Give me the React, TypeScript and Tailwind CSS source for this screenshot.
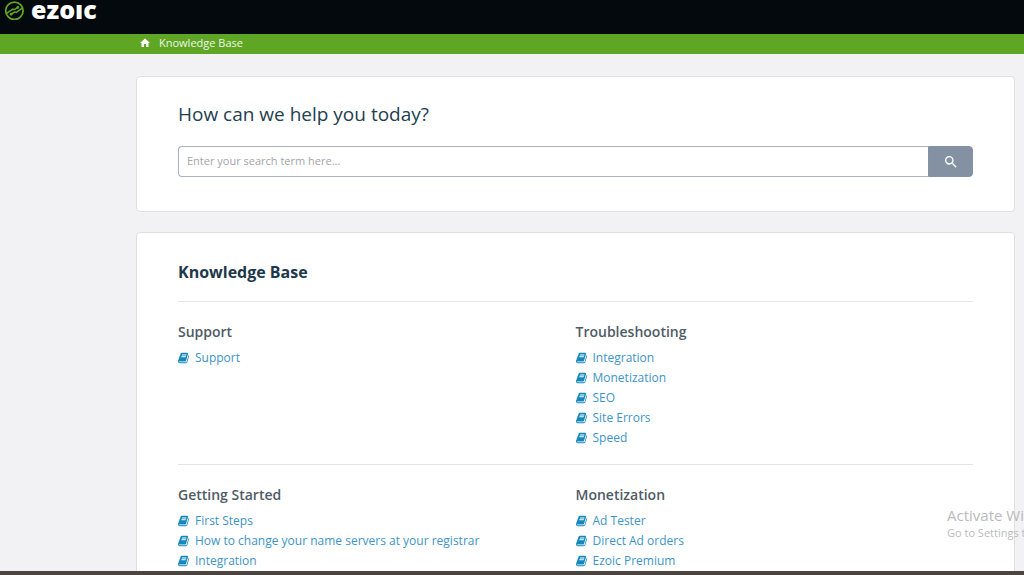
import React from "react";
import { MdHome, MdSearch } from "react-icons/md";

type Category = { title: string; links: string[] };

const rows: Category[][] = [
  [
    { title: "Support", links: ["Support"] },
    {
      title: "Troubleshooting",
      links: ["Integration", "Monetization", "SEO", "Site Errors", "Speed"],
    },
  ],
  [
    {
      title: "Getting Started",
      links: [
        "First Steps",
        "How to change your name servers at your registrar",
        "Integration",
      ],
    },
    {
      title: "Monetization",
      links: ["Ad Tester", "Direct Ad orders", "Ezoic Premium"],
    },
  ],
];

function LogoMark() {
  return (
    <svg viewBox="0 0 20 20" className="size-5 shrink-0" fill="none" aria-hidden="true">
      <circle cx="10.4" cy="10.8" r="8.7" stroke="#5fa624" strokeWidth="1.8" />
      <g stroke="#5fa624" strokeWidth="1.5" strokeLinecap="round" strokeLinejoin="round">
        <path d="M2.6 13.4 8.6 9.2 10.4 9.6 13.8 7.4" />
        <path d="M7.2 14.2 10.6 12 12.4 12.4 18.2 8.2" />
      </g>
      <circle cx="13.8" cy="7.4" r="1.4" fill="#5fa624" />
      <circle cx="7.2" cy="14.2" r="1.4" fill="#5fa624" />
    </svg>
  );
}

function BookIcon() {
  return (
    <svg viewBox="0 0 1792 1792" className="size-3 shrink-0" fill="#1487bd" aria-hidden="true">
      <path d="M1639 478q40 57 18 129l-275 906q-19 64-76.5 107.5t-122.5 43.5h-923q-77 0-148.5-53.5t-99.5-131.5q-24-67-2-127 0-4 3-27t4-37q1-8-3-21.5t-3-19.5q2-11 8-21t16.5-23.5 16.5-23.5q23-38 45-91.5t30-91.5q3-10 .5-30t-.5-28q3-11 17-28t17-23q21-36 42-92t25-90q1-9-2.5-32t.5-28q4-13 22-30.5t22-22.5q19-26 42.5-84.5t27.5-96.5q1-8-3-25.5t-2-26.5q2-8 9-18t18-23 17-21q8-12 16.5-30.5t15-35 16-36 19.5-32 26.5-23.5 36-11.5 47.5 5.5l-1 3q38-9 51-9h761q74 0 114 56t18 130l-274 906q-36 119-71.5 153.5t-128.5 34.5h-869q-27 0-38 15-11 16-1 43 24 70 144 70h923q29 0 56-15.5t35-41.5l300-987q7-22 5-57 38 15 59 43zm-1064 2q-4 13 2 22.5t20 9.5h608q13 0 25.5-9.5t16.5-22.5l21-64q4-13-2-22.5t-20-9.5h-608q-13 0-25.5 9.5t-16.5 22.5zm-83 256q-4 13 2 22.5t20 9.5h608q13 0 25.5-9.5t16.5-22.5l21-64q4-13-2-22.5t-20-9.5h-608q-13 0-25.5 9.5t-16.5 22.5z" />
    </svg>
  );
}

function CategoryBlock({ title, links }: Category) {
  return (
    <section>
      <h3 className="text-sm leading-5 font-semibold text-[#4f5b66]">{title}</h3>
      <ul className="mt-1.5">
        {links.map((link) => (
          <li key={link} className="flex">
            <a
              href="#"
              className="flex items-center gap-[5px] text-xs leading-5 text-[#3e94c6]"
            >
              <BookIcon />
              {link}
            </a>
          </li>
        ))}
      </ul>
    </section>
  );
}

export default function App() {
  return (
    <div className="relative flex h-screen flex-col overflow-hidden bg-[#f2f2f4] font-['Open_Sans','Noto_Sans',sans-serif]">
      <header className="flex h-[34px] shrink-0 items-start bg-[#03090c] pl-1">
        <a href="#" aria-label="ezoic" className="flex items-start gap-[7px]">
          <LogoMark />
          <span className="text-[25px] leading-[18px] font-extrabold text-white">ezoıc</span>
        </a>
      </header>

      <nav className="flex h-5 shrink-0 items-center bg-[#5fa624] pr-2 pb-[3px] pl-[139px]">
        <a href="#" aria-label="Home" className="text-white">
          <MdHome className="size-3" />
        </a>
        <a href="#" className="ml-2 text-[11px] leading-4 text-[#eef6e6]">
          Knowledge Base
        </a>
      </nav>

      <main className="flex min-h-0 flex-1 flex-col gap-5 pt-[22px] pr-[9px] pl-[136px]">
        <form
          className="shrink-0 rounded border border-[#dfe0e0] bg-white px-[41px] pt-[23px] pb-[34px]"
          onSubmit={(e) => e.preventDefault()}
        >
          <label htmlFor="search" className="block text-[19px] leading-7 text-[#24404f]">
            How can we help you today?
          </label>
          <div className="mt-[18px] flex h-[31px]">
            <input
              id="search"
              type="text"
              placeholder="Enter your search term here..."
              className="min-w-0 flex-1 rounded-l-sm border border-r-0 border-[#a9b1c3] bg-white px-2 text-[11px] text-gray-700 outline-none placeholder:text-[#a3a5a6]"
            />
            <button
              type="submit"
              aria-label="Search"
              className="flex w-[45px] items-center justify-center rounded-r-sm border border-[#8592a6] bg-[#8391a2] text-white"
            >
              <MdSearch className="size-4" />
            </button>
          </div>
        </form>

        <div className="shrink-0 rounded border border-[#dfe0e0] bg-white px-[41px] pt-[27px]">
          <h2 className="text-base leading-6 font-bold text-[#1d384a]">Knowledge Base</h2>
          <div className="mt-[17px]">
            {rows.map((row) => (
              <div
                key={row[0].title}
                className="grid grid-cols-2 border-t border-[#e4e5e6] pt-5 pb-4"
              >
                {row.map((category) => (
                  <CategoryBlock key={category.title} {...category} />
                ))}
              </div>
            ))}
          </div>
        </div>
      </main>

      <aside className="pointer-events-none absolute right-0 bottom-[34px] w-[77px] whitespace-nowrap text-[#b9bbbd]">
        <p className="text-[15px] leading-5">Activate Wi</p>
        <p className="text-[11px] leading-4">Go to Settings t</p>
      </aside>

      <footer className="z-10 h-1 shrink-0 bg-[#4b4441]" />
    </div>
  );
}
